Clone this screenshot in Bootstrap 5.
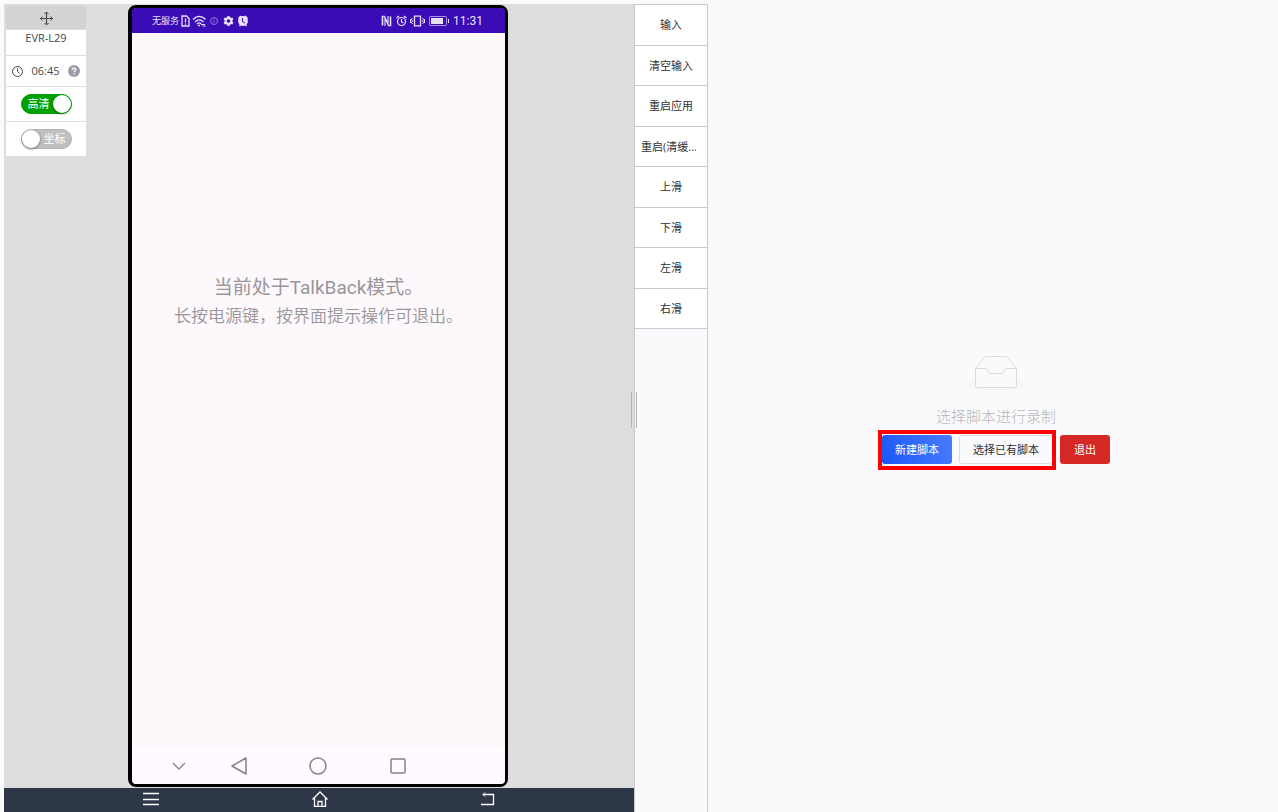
<!DOCTYPE html>
<html lang="zh-CN">
<head>
<meta charset="utf-8">
<meta name="viewport" content="width=device-width, initial-scale=1">
<title>脚本录制</title>
<link href="https://cdn.jsdelivr.net/npm/bootstrap@5.3.0/dist/css/bootstrap.min.css" rel="stylesheet">
<style>
body{background:#fafafc;color:#303133;font-family:"Open Sans","Noto Sans CJK SC",sans-serif;font-size:11px;line-height:16px}
.workspace{display:grid;grid-template-columns:minmax(0,630fr) 74px minmax(0,570fr);padding:4px 0 0 4px}
.stage{background:#ddd}
.phone-slot{padding:1px 2px 1px 0}
.phone{aspect-ratio:380/782;border:4px solid #000;border-right-width:3px;border-bottom-width:3px;border-top-width:3px;border-radius:8px;background:#fdf8fc}
.statusbar{background:#3b0cb6;color:#e9e0fa;height:25px;padding:0 22px 0 20px;font-size:9px;border-radius:4px 4px 0 0}
.clock{font-family:Roboto,sans-serif;font-size:12px}
.talkback{color:#999599;font-family:Roboto,"Noto Sans CJK SC",sans-serif;padding-top:241px;line-height:28px}
.talkback h1{font-size:19px;line-height:28px;font-weight:400}
.talkback p{font-size:17px;font-weight:350}
.softkeys{display:grid;grid-template-columns:41fr 80fr 80fr 80fr;padding:0 18% 0 7%;height:36px;background:#fffaff;border-radius:0 0 4px 4px;place-items:center;color:#858085}
.navkeys{background:#2d3748;height:24px;padding:0 10%}
.navkeys button{color:#fff;margin-bottom:2px}
.toolbox{top:2px;left:2px;width:80px;display:grid;gap:1px;background:#ddd;color:#45494f}
.toolbox>div{background:#fff}
.toolbox .grip{background:#d3d3d3;height:23px}
.model{height:25px;line-height:16px}
.timer{height:30px}
.toggle-row{height:34px}
.toggle{display:grid;width:51px;height:20px;cursor:pointer}
.toggle>*{grid-area:1/1}
.toggle input{appearance:none;margin:0;width:51px;height:20px;border-radius:10px;background:#bfbfbf;padding:1px;display:flex;border:1px solid #b5b5b5}
.toggle input::before{content:"";width:18px;height:18px;margin:-1px;border-radius:50%;background:#fff;box-shadow:0 1px 3px #0006}
.toggle input:checked{background:#00a000;border-color:#00a000;justify-content:flex-end}
.toggle span{color:#fff;line-height:20px;padding-left:23px;pointer-events:none}
.toggle input:checked+span{padding-left:7px}
.actions{border:solid #c9c9ce;border-width:0 1px}
.action-list{height:325px;border-top:1px solid #c9c9ce}
.action-list button{background:#fff;border:0;border-bottom:1px solid #c9c9ce;padding:1px 6px 0;color:#303133;flex:1 1 0;min-height:0}
.splitter{top:50%;right:-3px;width:6px;height:36px;transform:translateY(-50%);border:solid #b4b4b8;border-width:0 1px;z-index:2;margin-top:2px}
.empty-state{padding:2px 0 0 6px}
.empty-text{color:#b8b8bb;font-size:15px;line-height:22px;margin:14px 0 8px;font-weight:300}
.btn-row{gap:7px}
.toolbar-btn{--bs-btn-font-size:11px;--bs-btn-line-height:16px;--bs-btn-border-radius:3px;--bs-btn-padding-x:13px;height:29px;padding-top:1px;padding-bottom:0}
.btn-create{background:linear-gradient(70deg,#1b57f5,#487cff);color:#fff;border:0;padding-left:13px;padding-right:13px}
.btn-pick{border-color:#dcdce0;color:#303133}
.btn-exit{background:#d62824;color:#fff;border:0;padding-left:14px;padding-right:14px}
.highlight{inset:-5px -3px -6px -4px;border:4px solid #f00;pointer-events:none}
svg{display:block;fill:none;stroke:currentColor}
</style>
</head>
<body>
<main class="workspace min-vh-100">
  <section class="stage d-flex flex-column position-relative">
    <div class="phone-slot flex-fill d-flex justify-content-center position-relative">
      <div class="toolbox position-absolute text-center">
        <div class="grip d-flex align-items-center justify-content-center">
          <svg width="14" height="14" viewBox="0 0 14 14"><path d="M7.500 1v12M1 7.500h13" stroke-width="1.200"/><path d="M5.500 3l2-2 2 2M5.500 12l2 2 2-2M3.500 5.500l-2 2 2 2M11.500 5.500l2 2-2 2"/></svg>
        </div>
        <div class="model">EVR-L29</div>
        <div class="timer d-flex align-items-center justify-content-center gap-2">
          <svg width="11" height="11" viewBox="0 0 11 11"><circle cx="5.500" cy="5.500" r="5"/><path d="M5.500 2.500v3l2 2"/></svg>
          <span>06:45</span>
          <svg width="12" height="12" viewBox="0 0 12 12"><circle cx="6" cy="6" r="6" fill="#9a9da8" stroke="none"/><path stroke="#fff" d="M4.300 4.700c0-2.200 3.400-2.200 3.400 0C7.700 6 6 5.900 6 7.300M6 8.300v1.200" stroke-width="1.300"/></svg>
        </div>
        <div class="toggle-row d-flex align-items-center justify-content-center">
          <label class="toggle text-start"><input type="checkbox" role="switch" checked><span>高清</span></label>
        </div>
        <div class="toggle-row d-flex align-items-center justify-content-center">
          <label class="toggle text-start"><input type="checkbox" role="switch"><span>坐标</span></label>
        </div>
      </div>

      <div class="phone d-flex flex-column">
        <div class="statusbar d-flex align-items-center justify-content-between">
          <div class="d-flex align-items-center">
            <span>无服务</span>
            <svg width="74" height="14" viewBox="0 0 74 14">
              <path d="M3 2h4.500L10 4.500V12H3zM6.500 4.500v4M6.500 9.500v1.300" stroke-width="1.300"/>
              <path d="M14 5.500c4-4 8.500-4 12.500 0M16 8c3-3 5.500-3 8.500 0M18 10c1.500-1.500 3-1.500 4 0" stroke-width="1.300"/><circle cx="20" cy="11.500" r="1" fill="currentColor" stroke="none"/><path d="M22 10.500h4M23.500 12h3"/>
              <g opacity=".5"><circle cx="35" cy="7" r="3.500"/><path d="M35 6v3M35 4.500v1"/></g>
              <circle cx="49.500" cy="7" r="2.900" stroke-width="2.200"/><path d="M49.500 2v2M49.500 10v2M45.100 4.500l1.800 1M52.100 8.500l1.800 1M45.100 9.500l1.800-1M52.100 5.500l1.800-1" stroke-width="2.200"/>
              <circle cx="64" cy="7" r="4.900" fill="currentColor" stroke="none"/><path d="M59.500 4.500L62 2M66 2l2.500 2.500M60.500 12l1.300-1.500M67.500 12l-1.300-1.500" stroke-width="1.600"/><path d="M63.500 4v3.500l2.500 1.500" stroke="#3b0cb6"/>
            </svg>
          </div>
          <div class="d-flex align-items-center gap-1">
            <svg width="69" height="14" viewBox="0 0 69 14">
              <path d="M2.500 2v9.500M10.500 2.500V12" stroke-width="1.600"/><path d="M2 2.300h2.500l4 8.500M11 11.700H8.500l-4-8.500M5 5v7M8 2v7" stroke-width="1.100"/>
              <circle cx="21.500" cy="7.500" r="4" stroke-width="1.200"/><path d="M21.500 5v3l2 1M16.500 4l2.500-2M24 2l2.500 2" stroke-width="1.200"/>
              <path d="M34.500 2.200h6v9.600h-6z" stroke-width="1.300"/><path d="M32.500 4l-1 1.500 1 1.500-1 1.500 1 1.500M42.500 4l1 1.500-1 1.500 1 1.500-1 1.500M30.500 5v4M44.500 5v4"/>
              <rect x="49.500" y="2.500" width="17" height="9" rx="1" opacity=".65"/><rect x="51" y="4" width="12" height="6" fill="currentColor" stroke="none"/><path d="M68.500 5v4"/>
            </svg>
            <span class="clock">11:31</span>
          </div>
        </div>
        <div class="talkback text-center flex-fill">
          <h1 class="m-0">当前处于TalkBack模式。</h1>
          <p class="m-0">长按电源键，按界面提示操作可退出。</p>
        </div>
        <div class="softkeys">
          <svg width="14" height="8" viewBox="0 0 14 8" stroke-width="1.300"><path d="M1 1l6 6 6-6"/></svg>
          <svg width="16" height="18" viewBox="0 0 16 18" stroke-width="1.500"><path d="M15 1v16L1 9z" stroke-linejoin="round"/></svg>
          <svg width="18" height="18" viewBox="0 0 18 18" stroke-width="1.500"><circle cx="9" cy="9" r="8"/></svg>
          <svg width="16" height="16" viewBox="0 0 16 16" stroke-width="1.500"><rect x="1" y="1" width="14" height="14" rx="1"/></svg>
        </div>
      </div>
    </div>
    <nav class="navkeys d-flex align-items-center justify-content-around" aria-label="设备按键">
      <button class="btn border-0 p-0" aria-label="菜单"><svg width="16" height="14" viewBox="0 0 16 14"><path d="M0 1.500h16M0 7.500h16M0 12.500h16" stroke-width="1.300"/></svg></button>
      <button class="btn border-0 p-0" aria-label="主页"><svg width="16" height="16" viewBox="0 0 16 16" stroke-width="1.300"><path d="M.5 8.500L8 1l7.500 7.500M2.500 7v8.300h11V7M6 15v-4.500h4V15"/></svg></button>
      <button class="btn border-0 p-0" aria-label="返回"><svg width="14" height="14" viewBox="0 0 14 14"><path d="M2 2.500h10.500v10H0" stroke-width="1.300"/><path d="M4 .5L2 2.500l2 2"/></svg></button>
    </nav>
    <div class="splitter position-absolute"></div>
  </section>

  <aside class="actions">
    <div class="action-list d-flex flex-column">
      <button class="text-truncate">输入</button>
      <button class="text-truncate">清空输入</button>
      <button class="text-truncate">重启应用</button>
      <button class="text-truncate">重启(清缓存)</button>
      <button class="text-truncate">上滑</button>
      <button class="text-truncate">下滑</button>
      <button class="text-truncate">左滑</button>
      <button class="text-truncate">右滑</button>
    </div>
  </aside>

  <section class="empty-state d-flex flex-column align-items-center justify-content-center">
    <svg width="56" height="36" viewBox="0 0 56 36">
      <ellipse cx="28" cy="30" rx="28" ry="6" fill="#f4f4f5" stroke="none"/>
      <g stroke="#dadadc"><path fill="#fafafb" d="M7.500 13.500L16.500 2.300c.5-.6 1-.8 1.800-.8h19.400c.8 0 1.300.2 1.800.8l9 11.200"/><path d="M7.500 13.500h10c1 0 1.500.7 1.800 1.700l.8 2.300c.2.700.6 1 1.300 1h13.200c.7 0 1.100-.3 1.300-1l.8-2.300c.3-1 .8-1.700 1.800-1.700h10v17c0 1.200-.8 2-2 2h-37c-1.200 0-2-.8-2-2z" fill="#fafafb"/></g>
    </svg>
    <div class="empty-text">选择脚本进行录制</div>
    <div class="btn-row d-flex">
      <div class="btn-row d-flex position-relative">
        <button class="btn toolbar-btn btn-create">新建脚本</button>
        <button class="btn toolbar-btn btn-pick">选择已有脚本</button>
        <div class="highlight position-absolute"></div>
      </div>
      <button class="btn toolbar-btn btn-exit">退出</button>
    </div>
  </section>
</main>
<script src="https://cdn.jsdelivr.net/npm/bootstrap@5.3.0/dist/js/bootstrap.bundle.min.js"></script>
</body>
</html>
